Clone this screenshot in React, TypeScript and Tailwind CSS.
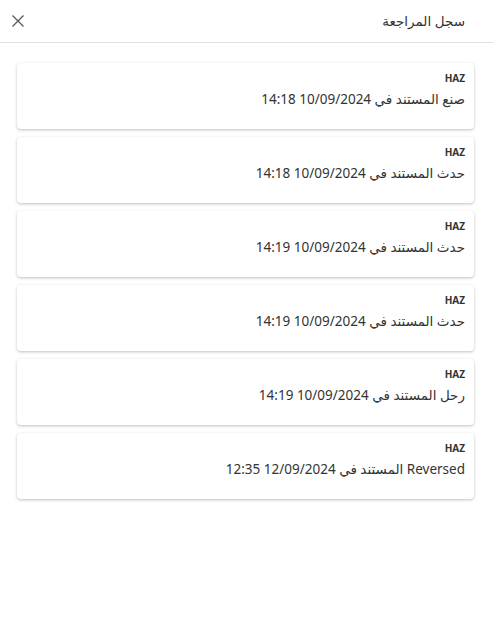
const entries = [
  "صنع المستند في 10/09/2024 14:18",
  "حدث المستند في 10/09/2024 14:18",
  "حدث المستند في 10/09/2024 14:19",
  "حدث المستند في 10/09/2024 14:19",
  "رحل المستند في 10/09/2024 14:19",
  "Reversed المستند في 12/09/2024 12:35",
];

export default function App() {
  return (
    <div
      dir="rtl"
      className="min-h-screen bg-white text-[#333]"
      style={{ fontFamily: '"Noto Sans", "DejaVu Sans", sans-serif' }}
    >
      <header className="flex h-[43px] items-center justify-between border-b border-[#e0e0e0] pr-[28px] pl-[12px]">
        <h1 className="text-[13.5px] font-normal">سجل المراجعة</h1>
        <button className="flex h-[12px] w-[12px] items-center justify-center text-[#555]">
          <svg width="12" height="12" viewBox="0 0 12 12" fill="none" stroke="currentColor" strokeWidth="1.2">
            <path d="M0.5 0.5 L11.5 11.5 M11.5 0.5 L0.5 11.5" />
          </svg>
        </button>
      </header>

      <div className="flex flex-col gap-[8px] pt-[20px] pr-[19px] pl-[17px]">
        {entries.map((text, i) => (
          <div
            key={i}
            className="flex h-[66px] flex-col rounded-[4px] bg-white pt-[8px] pr-[9px] shadow-[0_1px_3px_rgba(0,0,0,0.25)]"
          >
            <div className="text-[10px] font-bold leading-[14px] text-[#333]">HAZ</div>
            <div className="mt-[4px] text-[13.5px] leading-[20px] text-[#333]">{text}</div>
          </div>
        ))}
      </div>
    </div>
  );
}
